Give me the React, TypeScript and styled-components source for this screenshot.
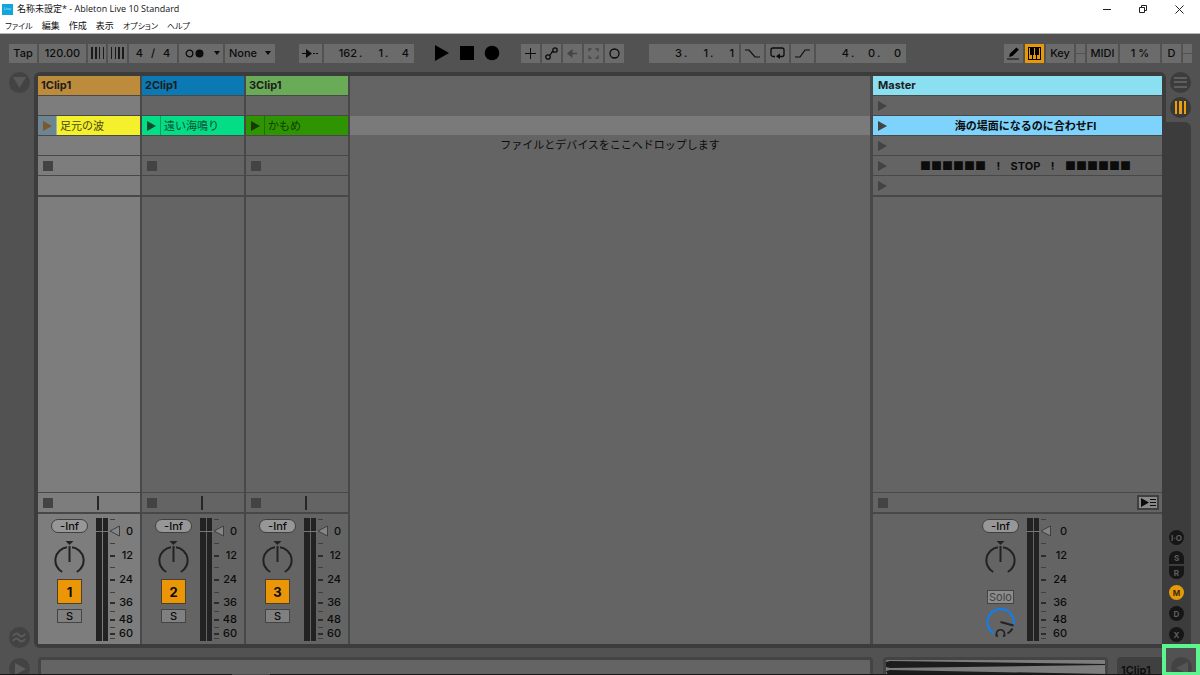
import React from "react";
import styled, { createGlobalStyle, css } from "styled-components";

const c = {
  app: "#525252",
  frame: "#3c3c3c",
  line: "#484848",
  track: "#646464",
  selected: "#7d7d7d",
  control: "#6b6b6b",
  ink: "#0c0c0c",
  orange: "#e69a0a",
};

const GlobalStyle = createGlobalStyle`
  * { box-sizing: border-box; }
  html, body { margin: 0; height: 100%; }
  body {
    overflow: hidden;
    background: ${c.app};
    color: ${c.ink};
    font: 500 11px/14px Inter, "Noto Sans CJK JP", sans-serif;
  }
  button, input, select {
    appearance: none;
    margin: 0;
    padding: 0;
    border: 0;
    border-radius: 0;
    background: none;
    color: inherit;
    font: inherit;
  }
  button { display: flex; align-items: center; justify-content: center; flex: none; }
  svg { display: block; flex: none; }
`;

const Window = styled.div`
  display: flex;
  flex-direction: column;
  height: 100vh;
`;

/* ---------- window chrome ---------- */

const Chrome = styled.header`
  flex: none;
  height: 34px;
  background: #fff;
  border-bottom: 1px solid #b4b8b4;
  color: #111;
  font-family: "Open Sans", "Noto Sans CJK JP", sans-serif;
  font-weight: 400;
`;

const TitleRow = styled.div`
  display: flex;
  align-items: center;
  height: 18px;
  padding-left: 2px;
  gap: 4px;
  font-size: 9px;
`;

const LiveBadge = styled.span`
  display: grid;
  place-items: center;
  width: 11px;
  height: 11px;
  background: #12a5dd;
  color: #c9f2ff;
  font-size: 4px;
  line-height: 8px;
`;

const WindowTitle = styled.h1`
  flex: 1;
  margin: 0;
  font: inherit;
  white-space: pre;
`;

const WindowButtons = styled.div`
  display: flex;
  gap: 22px;
  padding-right: 14px;
`;

const WindowButton = styled.button`
  width: 14px;
  height: 14px;
`;

const MenuBar = styled.nav`
  display: flex;
  gap: 9px;
  padding-left: 5px;
  height: 15px;
  align-items: center;
`;

const MenuItem = styled.span<{ $kana: boolean }>`
  font-size: ${(p) => (p.$kana ? 8 : 9)}px;
  font-feature-settings: "palt";
`;

/* ---------- toolbar ---------- */

const Toolbar = styled.div`
  display: flex;
  flex: none;
  align-items: center;
  height: 38px;
  padding: 0 8px 0 9px;
`;

const Group = styled.div<{ $before?: number; $gap?: number; $end?: boolean }>`
  display: flex;
  align-items: center;
  gap: ${(p) => p.$gap ?? 2}px;
  margin-left: ${(p) => (p.$end ? "auto" : `${p.$before ?? 0}px`)};
`;

const box = css<{ $w: number }>`
  width: ${(p) => p.$w}px;
  height: 19px;
  background: ${c.control};
`;

const ToolButton = styled.button<{ $w: number; $on?: boolean; $gap?: number }>`
  ${box}
  gap: ${(p) => p.$gap ?? 0}px;
  ${(p) => p.$on && `background: ${c.orange};`}
`;

const Metronome = styled(ToolButton)`
  justify-content: space-between;
  padding: 0 3px 0 6px;
`;

const ToolInput = styled.input<{ $w: number }>`
  ${box}
  text-align: center;
`;

const SelectBox = styled.div<{ $w: number }>`
  ${box}
  display: flex;
  align-items: center;
  padding-right: 4px;
`;

const ToolSelect = styled.select`
  flex: 1;
  min-width: 0;
  padding-left: 4px;
`;

const TimeBox = styled.div`
  display: flex;
  align-items: center;
  width: 90px;
  height: 19px;
  padding-right: 5px;
  justify-content: flex-end;
  background: ${c.control};
`;

const TimePart = styled.input`
  width: 21px;
  text-align: right;
`;

const Dot = styled.span`
  width: 5px;
  padding-left: 2px;
`;

const Transport = styled.button`
  width: 16px;
  height: 19px;
`;

const Split = styled.div`
  display: grid;
  grid-template-rows: 9px 9px;
  gap: 1px;
  width: 9px;
  & > i { background: ${c.control}; }
`;

/* ---------- session view ---------- */

const Main = styled.main`
  display: flex;
  flex: 1;
  min-height: 0;
`;

const LeftRail = styled.aside`
  display: flex;
  flex-direction: column;
  justify-content: space-between;
  align-items: center;
  flex: none;
  width: 34px;
  padding-left: 4px;
`;

const RoundButton = styled.button<{ $bg?: string }>`
  width: 21px;
  height: 21px;
  border-radius: 50%;
  background: ${(p) => p.$bg ?? "#434343"};
`;

const Session = styled.section`
  display: flex;
  flex: 1;
  min-width: 0;
  gap: 2px;
  border: 4px solid ${c.frame};
  border-radius: 6px 6px 0 6px;
  background: ${c.line};
`;

const Column = styled.div<{ $selected?: boolean; $wide?: boolean }>`
  --fill: ${(p) => (p.$selected ? c.selected : c.track)};
  display: flex;
  flex-direction: column;
  flex: none;
  width: ${(p) => (p.$wide ? 289 : 102)}px;
  margin-left: ${(p) => (p.$wide ? 1 : 0)}px;
`;

const Head = styled.h2<{ $color: string; $pad: number }>`
  flex: none;
  height: 19px;
  margin: 0 0 1px;
  padding-left: ${(p) => p.$pad}px;
  background: ${(p) => p.$color};
  color: #1d1d1d;
  font-size: 11px;
  font-weight: 700;
  line-height: 19px;
`;

const Slot = styled.div<{ $color?: string }>`
  display: flex;
  align-items: center;
  flex: none;
  height: 19px;
  margin-bottom: 1px;
  background: ${(p) => p.$color ?? "var(--fill)"};
`;

const Launch = styled.button<{ $bg?: string; $divider?: string }>`
  width: 19px;
  height: 19px;
  background: ${(p) => p.$bg ?? "none"};
  border-right: 1px solid ${(p) => p.$divider ?? "transparent"};
`;

const ClipName = styled.span<{ $ink: string }>`
  padding-left: 3px;
  color: ${(p) => p.$ink};
  font-weight: 400;
`;

const SceneName = styled.span`
  flex: 1;
  padding-right: 3px;
  text-align: center;
  white-space: pre;
  font-weight: 700;
`;

const Blocks = styled.span`
  font-family: "Noto Sans CJK JP", sans-serif;
`;

const Body = styled.div`
  flex: 1;
  margin-top: 1px;
  background: var(--fill);
`;

const StopSquare = styled.button`
  width: 10px;
  height: 10px;
  margin-left: 5px;
  background: #434343;
`;

const StatusRow = styled.div`
  display: flex;
  align-items: center;
  flex: none;
  height: 19px;
  margin: 1px 0 2px;
  background: var(--fill);
`;

const StatusMark = styled.i`
  width: 2px;
  height: 14px;
  margin-left: 44px;
  background: #262626;
`;

const BackToArrangement = styled.button`
  width: 22px;
  height: 15px;
  margin: 0 3px 0 auto;
  background: #8a8a8a;
  border: 2px solid #3f3f3f;
`;

const Mixer = styled.div<{ $center?: boolean }>`
  display: flex;
  flex: none;
  gap: 7px;
  height: 130px;
  padding-left: ${(p) => (p.$center ? 14 : 12)}px;
  justify-content: ${(p) => (p.$center ? "center" : "flex-start")};
  background: var(--fill);
`;

const Strip = styled.div`
  display: flex;
  flex-direction: column;
  align-items: center;
  width: 39px;
  padding-top: 5px;
`;

const Level = styled.output`
  width: 37px;
  height: 14px;
  border: 1px solid #3f3f3f;
  border-radius: 7px;
  background: #979797;
  line-height: 12px;
  text-align: center;
`;

const Control = styled.label<{ $top?: number }>`
  position: relative;
  margin-top: ${(p) => p.$top ?? 0}px;
`;

const HiddenRange = styled.input`
  position: absolute;
  inset: 0;
  width: 100%;
  height: 100%;
  opacity: 0;
`;

const Activator = styled.button`
  width: 25px;
  height: 25px;
  margin-top: 4px;
  border: 1px solid #4a4030;
  background: #ea9607;
  font-size: 13px;
  font-weight: 700;
`;

const Solo = styled.button<{ $cue?: boolean }>`
  width: ${(p) => (p.$cue ? 27 : 25)}px;
  height: 14px;
  margin-top: ${(p) => (p.$cue ? 15 : 5)}px;
  border: 1px solid #444;
  background: ${(p) => (p.$cue ? "#8c8c8c" : "#808080")};
  color: ${(p) => (p.$cue ? "#404040" : c.ink)};
  font-weight: ${(p) => (p.$cue ? 400 : 500)};
  line-height: 12px;
`;

const DropArea = styled.div`
  flex: 1;
  min-width: 0;
  padding-top: 40px;
  background: ${c.track};
  text-align: center;
  font-weight: 400;
`;

const DropHighlight = styled.div`
  height: 19px;
  margin-bottom: 3px;
  background: #7a7a7a;
`;

/* ---------- right rail ---------- */

const RightRail = styled.aside`
  display: flex;
  flex-direction: column;
  flex: none;
  width: 34px;
`;

const ViewButtons = styled.div`
  display: flex;
  flex-direction: column;
  gap: 4px;
  height: 50px;
  padding-left: 4px;
`;

const Shelf = styled.div`
  display: flex;
  flex-direction: column;
  align-items: flex-start;
  justify-content: flex-end;
  gap: 6px;
  flex: 1;
  width: 25px;
  padding: 0 0 6px 3px;
  border-radius: 0 6px 0 0;
  background: ${c.frame};
`;

const Mark = styled.button<{ $on?: boolean; $half?: "top" | "bottom" }>`
  width: 15px;
  height: ${(p) => (p.$half ? 13 : 15)}px;
  border-radius: ${(p) =>
    p.$half === "top" ? "7px 7px 0 0" : p.$half === "bottom" ? "0 0 7px 7px" : "8px"};
  background: ${(p) => (p.$on ? c.orange : "#161616")};
  color: ${(p) => (p.$on ? "#3a2a08" : "#5e5e5e")};
  font-size: 8px;
  line-height: 8px;
  font-weight: 700;
`;

const Pair = styled.div`
  display: grid;
  gap: 2px;
`;

/* ---------- bottom ---------- */

const Bottom = styled.footer`
  display: flex;
  flex: none;
  height: 27px;
  padding-top: 9px;
  overflow: hidden;
  border-bottom: 1px solid #161616;
  border-image: linear-gradient(90deg, #161616 233px, #4a4a4a 233px 271px, #161616 271px) 1;
`;

const BottomLeft = styled.div`
  flex: none;
  width: 38px;
  padding: 1px 0 0 9px;
`;

const InfoPanel = styled.div`
  flex: 1;
  min-width: 0;
  height: 40px;
  border: 3px solid #444;
  border-radius: 4px;
  background: ${c.track};
`;

const Overview = styled.div`
  flex: none;
  width: 225px;
  height: 40px;
  margin: 0 9px 0 10px;
  border: 3px solid #444;
  border-radius: 4px;
  background: #7d7d7d;
`;

const ClipTab = styled.button`
  width: 45px;
  height: 40px;
  margin-right: 38px;
  align-items: flex-start;
  justify-content: flex-start;
  padding: 6px 0 0 4px;
  border-radius: 4px 0 0 0;
  background: #404040;
  font-weight: 600;
`;

const Callout = styled.div`
  position: fixed;
  right: 0;
  bottom: 0;
  width: 38px;
  height: 31px;
  padding: 9px 0 0 5px;
  overflow: hidden;
  border: 4px solid #5cf590;
  border-bottom-width: 3px;
  background: ${c.app};
`;

/* ---------- drawings ---------- */

const Caret = () => (
  <svg width="6" height="4" aria-hidden="true">
    <path d="M0 0h6L3 4z" fill={c.ink} />
  </svg>
);

const PlayGlyph = ({ fill = "#434343" }: { fill?: string }) => (
  <svg width="9" height="10" aria-hidden="true">
    <path d="M0 0L9 5L0 10z" fill={fill} />
  </svg>
);

const Nudge = ({ flip }: { flip?: boolean }) => (
  <svg width="13" height="12" aria-hidden="true">
    {[2, 2, 1, 1].map((w, i) => {
      const x = [0, 4, 8, 12][i];
      return <rect key={i} x={flip ? 13 - x - w : x} y="0" width={w} height="12" fill="#1a1a1a" />;
    })}
  </svg>
);

const PanKnob = () => (
  <svg width="31" height="34" fill="none" stroke="#222" strokeWidth="2" aria-hidden="true">
    <path d="M11.500 0h8l-4 4z" fill="#222" stroke="none" />
    <path d="M13 6.200A13.300 13.300 0 0 0 8.200 31M18 6.200A13.300 13.300 0 0 1 22.800 31" />
    <path d="M15.500 5v16" />
  </svg>
);

const CueKnob = () => (
  <svg width="31" height="34" fill="none" stroke="#222" strokeWidth="2" aria-hidden="true">
    <g transform="translate(.5 0)">
      <path d="M8.200 25.600A13.300 13.300 0 1 1 28.200 17" stroke="#0b80f5" />
      <path d="M15 14l13 3.500M27 20.500a13.300 13.300 0 0 1-5 5" />
      <path d="M12.300 28.600A4 4 0 1 1 17.700 28.600" strokeWidth="1.500" />
      <path d="M10.800 25.500v3M19.200 25.500v3" strokeWidth="1.500" />
    </g>
  </svg>
);

const scale: [string, number][] = [["0", 17], ["12", 41], ["24", 65], ["36", 88], ["48", 105], ["60", 119]];
const minorTicks = [5, 29, 53, 78, 97, 113, 124];

const ScaleText = styled.text`
  font-size: 11px;
  fill: ${c.ink};
  text-anchor: end;
`;

const MeterDrawing = ({ labelX }: { labelX: number }) => (
  <svg width="41" height="130" aria-hidden="true">
    <path d="M0 4h6v123H0zM7 4h5v123H7z" fill="#222" />
    <path d="M0 17.500h14" stroke="#777" />
    <path d="M14 17L23.500 12V22z" fill="#858585" stroke="#3f3f3f" />
    {minorTicks.map((y) => <rect key={y} x="14" y={y} width="5" height="1" fill="#3f3f3f" />)}
    {scale.map(([label, y]) => (
      <g key={label}>
        {label !== "0" && <rect x="14" y={y} width="5" height="2" fill="#2c2c2c" />}
        <ScaleText x={labelX} y={y + 4}>{label}</ScaleText>
      </g>
    ))}
  </svg>
);

/* ---------- composed parts ---------- */

const TimeField = ({ label, parts }: { label: string; parts: string[] }) => (
  <TimeBox role="group" aria-label={label}>
    {parts.map((v, i) => (
      <React.Fragment key={i}>
        <TimePart aria-label={`${label} ${i + 1}`} defaultValue={v} />
        {i < 2 && <Dot>.</Dot>}
      </React.Fragment>
    ))}
  </TimeBox>
);

type Clip = { name: string; color: string; ink: string; launch: string; divider: string; glyph: string };
type TrackData = { title: string; color: string; clip: Clip; selected?: boolean };

const tracks: TrackData[] = [
  {
    title: "1Clip1", color: "#bd8b3c", selected: true,
    clip: { name: "足元の波", color: "#f4f02c", ink: "#4a4a12", launch: "#6d8492", divider: "#8fb2c8", glyph: "#7a5a2a" },
  },
  {
    title: "2Clip1", color: "#0b79b4",
    clip: { name: "遠い海鳴り", color: "#03dd86", ink: "#0b5034", launch: "#03dd86", divider: "#079c60", glyph: "#104a30" },
  },
  {
    title: "3Clip1", color: "#6aab57",
    clip: { name: "かもめ", color: "#2e9402", ink: "#123c02", launch: "#2e9402", divider: "#226e04", glyph: "#163a08" },
  },
];

const Track = ({ track, index }: { track: TrackData; index: number }) => {
  const { clip } = track;
  return (
    <Column $selected={track.selected}>
      <Head $color={track.color} $pad={3}>{track.title}</Head>
      <Slot />
      <Slot $color={clip.color}>
        <Launch $bg={clip.launch} $divider={clip.divider} aria-label={`Launch ${clip.name}`}>
          <PlayGlyph fill={clip.glyph} />
        </Launch>
        <ClipName $ink={clip.ink}>{clip.name}</ClipName>
      </Slot>
      <Slot />
      <Slot><StopSquare aria-label="Stop clip" /></Slot>
      <Slot />
      <Body />
      <StatusRow>
        <StopSquare aria-label="Stop track" />
        <StatusMark />
      </StatusRow>
      <Mixer>
        <Strip>
          <Level>-Inf</Level>
          <Control $top={8}>
            <PanKnob />
            <HiddenRange type="range" aria-label="Pan" />
          </Control>
          <Activator>{index + 1}</Activator>
          <Solo>S</Solo>
        </Strip>
        <Control>
          <MeterDrawing labelX={37} />
          <HiddenRange type="range" aria-label="Volume" />
        </Control>
      </Mixer>
    </Column>
  );
};

const scenes: { key: number; name?: React.ReactNode; color?: string }[] = [
  { key: 1 },
  { key: 2, name: "海の場面になるのに合わせFI", color: "#7dd3fb" },
  { key: 3 },
  { key: 4, name: <><Blocks>■■■■■■</Blocks>{"    !    STOP    !    "}<Blocks>■■■■■■</Blocks></> },
  { key: 5 },
];

const menus = [
  { label: "ファイル", kana: true },
  { label: "編集", kana: false },
  { label: "作成", kana: false },
  { label: "表示", kana: false },
  { label: "オプション", kana: true },
  { label: "ヘルプ", kana: true },
];

export default function App() {
  return (
    <Window>
      <GlobalStyle />
      <Chrome>
        <TitleRow>
          <LiveBadge>Live</LiveBadge>
          <WindowTitle>名称未設定* - Ableton Live 10 Standard</WindowTitle>
          <WindowButtons>
            <WindowButton aria-label="Minimize">
              <svg width="8" height="8"><path d="M0 4.500h8" stroke="#222" /></svg>
            </WindowButton>
            <WindowButton aria-label="Restore">
              <svg width="8" height="8" fill="none" stroke="#222"><path d="M.5 2.500h5v5h-5zM2.500 2V.5h5v5H6" /></svg>
            </WindowButton>
            <WindowButton aria-label="Close">
              <svg width="9" height="9" stroke="#222"><path d="M.5.5l8 8M8.500.5l-8 8" /></svg>
            </WindowButton>
          </WindowButtons>
        </TitleRow>
        <MenuBar>
          {menus.map((m) => <MenuItem key={m.label} $kana={m.kana}>{m.label}</MenuItem>)}
        </MenuBar>
      </Chrome>

      <Toolbar>
        <Group>
          <ToolButton $w={28}>Tap</ToolButton>
          <ToolInput $w={47} aria-label="Tempo" defaultValue="120.00" />
          <ToolButton $w={18} aria-label="Nudge down"><Nudge /></ToolButton>
          <ToolButton $w={19} aria-label="Nudge up"><Nudge flip /></ToolButton>
          <ToolButton $w={48} $gap={8}><span>4</span><span>/</span><span>4</span></ToolButton>
          <Metronome $w={44} aria-label="Metronome">
            <svg width="19" height="9"><circle cx="4.500" cy="4.500" r="3.300" fill="none" stroke={c.ink} strokeWidth="1.300" /><circle cx="14.500" cy="4.500" r="4" fill={c.ink} /></svg>
            <Caret />
          </Metronome>
          <SelectBox $w={50}>
            <ToolSelect aria-label="Quantization"><option>None</option></ToolSelect>
            <Caret />
          </SelectBox>
        </Group>

        <Group $before={24}>
          <ToolButton $w={23} aria-label="Follow">
            <svg width="17" height="9" fill={c.ink}><path d="M0 4h4V0l6 4.500L4 9V5H0zM11 4h2v1h-2zM14 4h2v1h-2z" /></svg>
          </ToolButton>
          <TimeField label="Arrangement position" parts={["162", "1", "4"]} />
        </Group>

        <Group $before={20} $gap={9}>
          <Transport aria-label="Play"><svg width="16" height="16"><path d="M1 0L15 8L1 16z" /></svg></Transport>
          <Transport aria-label="Stop"><svg width="16" height="16"><path d="M1 1h14v14H1z" /></svg></Transport>
          <Transport aria-label="Record"><svg width="16" height="16"><circle cx="8" cy="8" r="7.300" /></svg></Transport>
        </Group>

        <Group $before={21}>
          <ToolButton $w={19} aria-label="Overdub">
            <svg width="11" height="11" stroke={c.ink}><path d="M5.500 0v11M0 5.500h11" /></svg>
          </ToolButton>
          <ToolButton $w={19} aria-label="Automation arm">
            <svg width="13" height="13" fill="none" stroke={c.ink} strokeWidth="1.300"><circle cx="3" cy="10" r="2.200" /><circle cx="10" cy="3" r="2.200" /><path d="M4.300 8.200c3-.4.800-3.300 3.900-3.700" /></svg>
          </ToolButton>
          <ToolButton $w={19} aria-label="Re-enable automation">
            <svg width="11" height="9" fill="#454545"><path d="M0 4.500L5.500 0v3.700H10v1.600H5.500V9z" /></svg>
          </ToolButton>
          <ToolButton $w={19} aria-label="Capture">
            <svg width="11" height="11" fill="none" stroke="#454545" strokeWidth="1.300"><path d="M1 3.500V1h2.500M7.500 1H10v2.500M10 7.500V10H7.500M3.500 10H1V7.500" /></svg>
          </ToolButton>
          <ToolButton $w={19} aria-label="Session record">
            <svg width="11" height="11"><circle cx="5.500" cy="5.500" r="4.500" fill="none" stroke={c.ink} strokeWidth="1.300" /></svg>
          </ToolButton>
        </Group>

        <Group $before={25}>
          <TimeField label="Loop start" parts={["3", "1", "1"]} />
          <ToolButton $w={23} aria-label="Punch in">
            <svg width="15" height="9" fill="none" stroke={c.ink} strokeWidth="1.200"><path d="M0 1h4L10 8h5" /></svg>
          </ToolButton>
          <ToolButton $w={23} aria-label="Loop">
            <svg width="15" height="12" fill="none" stroke={c.ink} strokeWidth="1.300"><path d="M5 9.500H3A2 2 0 0 1 1 7.500V3a2 2 0 0 1 2-2h9a2 2 0 0 1 2 2v4.500a2 2 0 0 1-2 2H9" /><path d="M10 6.500v5.500L6 9.300z" fill={c.ink} stroke="none" /></svg>
          </ToolButton>
          <ToolButton $w={23} aria-label="Punch out">
            <svg width="15" height="9" fill="none" stroke={c.ink} strokeWidth="1.200"><path d="M0 8h5L10 1h5" /></svg>
          </ToolButton>
          <TimeField label="Loop length" parts={["4", "0", "0"]} />
        </Group>

        <Group $end>
          <ToolButton $w={19} aria-label="Draw mode">
            <svg width="13" height="13"><path d="M2 10L3 6.500L9.500.5l2.300 2.300L5.500 9z" /><path d="M0 12h12" stroke={c.ink} /></svg>
          </ToolButton>
          <ToolButton $w={19} $on aria-label="Computer MIDI keyboard">
            <svg width="13" height="13"><path d="M0 0h13v13H0z" /><path d="M1 1h1v7h2v4H1zM5 12V8h1V1h1v7h1v4zM9 12V8h2V1h1v11z" fill={c.orange} /></svg>
          </ToolButton>
          <ToolButton $w={28}>Key</ToolButton>
          <Split><i /><i /></Split>
          <ToolButton $w={31}>MIDI</ToolButton>
          <ToolButton $w={40}>1 %</ToolButton>
          <ToolButton $w={19}>D</ToolButton>
          <Split><i /><i /></Split>
        </Group>
      </Toolbar>

      <Main>
        <LeftRail>
          <RoundButton aria-label="Show browser">
            <svg width="13" height="11"><path d="M0 0h13L6.500 11z" fill="#585858" /></svg>
          </RoundButton>
          <RoundButton aria-label="Groove pool">
            <svg width="14" height="11" fill="none" stroke="#5c5c5c" strokeWidth="2"><path d="M1 4c2-3 4-3 6-1s4 2 6-1M1 9c2-3 4-3 6-1s4 2 6-1" /></svg>
          </RoundButton>
        </LeftRail>

        <Session>
          {tracks.map((t, i) => <Track key={t.title} track={t} index={i} />)}
          <DropArea>
            <DropHighlight />
            ファイルとデバイスをここへドロップします
          </DropArea>
          <Column $wide>
            <Head $color="#8adff0" $pad={5}>Master</Head>
            {scenes.map((s) => (
              <Slot key={s.key} $color={s.color}>
                <Launch aria-label={`Launch scene ${s.key}`}><PlayGlyph /></Launch>
                <SceneName>{s.name}</SceneName>
              </Slot>
            ))}
            <Body />
            <StatusRow>
              <StopSquare aria-label="Stop all clips" />
              <BackToArrangement aria-label="Back to arrangement">
                <svg width="15" height="9" fill={c.ink}><path d="M0 0l8 4.500L0 9zM9 1h6v1H9zM9 4h6v1H9zM9 7h6v1H9z" /></svg>
              </BackToArrangement>
            </StatusRow>
            <Mixer $center>
              <Strip>
                <Level>-Inf</Level>
                <Control $top={8}>
                  <PanKnob />
                  <HiddenRange type="range" aria-label="Master pan" />
                </Control>
                <Solo $cue>Solo</Solo>
                <Control $top={4}>
                  <CueKnob />
                  <HiddenRange type="range" aria-label="Cue volume" />
                </Control>
              </Strip>
              <Control>
                <MeterDrawing labelX={40} />
                <HiddenRange type="range" aria-label="Master volume" />
              </Control>
            </Mixer>
          </Column>
        </Session>

        <RightRail>
          <ViewButtons>
            <RoundButton $bg="#3c3c3c" aria-label="Arrangement view">
              <svg width="13" height="11" fill="#5e5e5e"><path d="M0 0h13v2H0zM0 4h13v2H0zM0 9h13v2H0z" /></svg>
            </RoundButton>
            <RoundButton $bg="#383838" aria-label="Session view">
              <svg width="13" height="13" fill="#f09c0c"><path d="M1 0h2v13H1zM5 0h3v13H5zM10 0h2v13h-2z" /></svg>
            </RoundButton>
          </ViewButtons>
          <Shelf>
            <Mark>I·O</Mark>
            <Pair>
              <Mark $half="top">S</Mark>
              <Mark $half="bottom">R</Mark>
            </Pair>
            <Mark $on>M</Mark>
            <Mark>D</Mark>
            <Mark>X</Mark>
          </Shelf>
        </RightRail>
      </Main>

      <Bottom>
        <BottomLeft>
          <RoundButton aria-label="Info view">
            <svg width="12" height="12"><path d="M1 0l11 6L1 12z" fill="#5c5c5c" /></svg>
          </RoundButton>
        </BottomLeft>
        <InfoPanel />
        <Overview>
          <svg width="100%" height="34" viewBox="0 0 220 34" preserveAspectRatio="none">
            <path d="M0 2l4-1L220 4v1L4 8L0 7zM0 11l4-1L220 14v1L4 19z" fill="#1c1c1c" />
          </svg>
        </Overview>
        <ClipTab>1Clip1</ClipTab>
      </Bottom>
      <Callout>
        <RoundButton aria-label="Show detail view">
          <svg width="12" height="12"><path d="M12 0v12L0 6z" fill="#555" /></svg>
        </RoundButton>
      </Callout>
    </Window>
  );
}
